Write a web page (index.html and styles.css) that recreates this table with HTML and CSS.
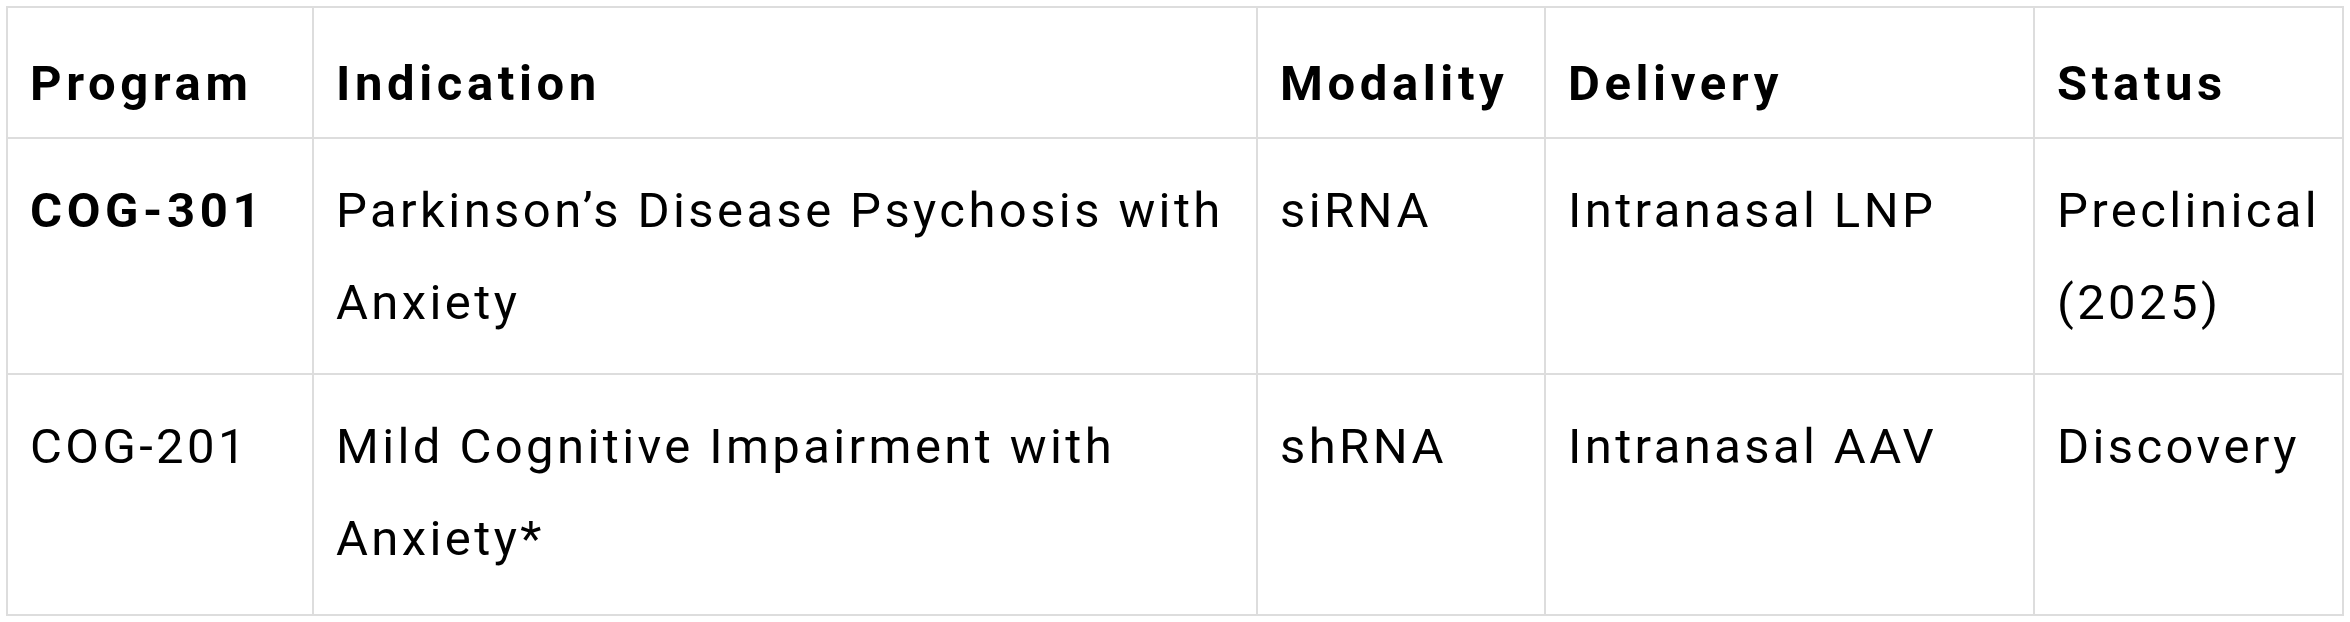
FILE: index.html
```html
<!DOCTYPE html>
<html lang="en">
<head>
<meta charset="utf-8">
<title>Pipeline</title>
<link rel="stylesheet" href="styles.css">
</head>
<body>
<div class="table">
  <div class="cell head">Program</div>
  <div class="cell head">Indication</div>
  <div class="cell head">Modality</div>
  <div class="cell head">Delivery</div>
  <div class="cell head">Status</div>

  <div class="cell strong">COG-301</div>
  <div class="cell">Parkinson’s Disease Psychosis with Anxiety</div>
  <div class="cell">siRNA</div>
  <div class="cell">Intranasal LNP</div>
  <div class="cell">Preclinical (2025)</div>

  <div class="cell">COG-201</div>
  <div class="cell">Mild Cognitive Impairment with Anxiety*</div>
  <div class="cell">shRNA</div>
  <div class="cell">Intranasal AAV</div>
  <div class="cell">Discovery</div>
</div>
</body>
</html>
```
FILE: styles.css
```css
html, body {
  margin: 0;
  background: #ffffff;
}

body {
  padding: 6px;
  font-family: Roboto, "Liberation Sans", sans-serif;
  color: #000000;
}

.table {
  display: grid;
  grid-template-columns: 304px 942px 286px 487px 307px;
  grid-template-rows: 129px 234px 239px;
  gap: 2px;
  padding: 2px;
  background: #dddddd;
  width: max-content;
}

.cell {
  background: #ffffff;
  padding: 26px 12px 0 22px;
  font-size: 49px;
  line-height: 92px;
  letter-spacing: 3.4px;
  font-weight: 400;
}

.head {
  padding-top: 30px;
  font-weight: 700;
  letter-spacing: 4.6px;
}

.strong {
  font-weight: 700;
  letter-spacing: 4.6px;
}
```
